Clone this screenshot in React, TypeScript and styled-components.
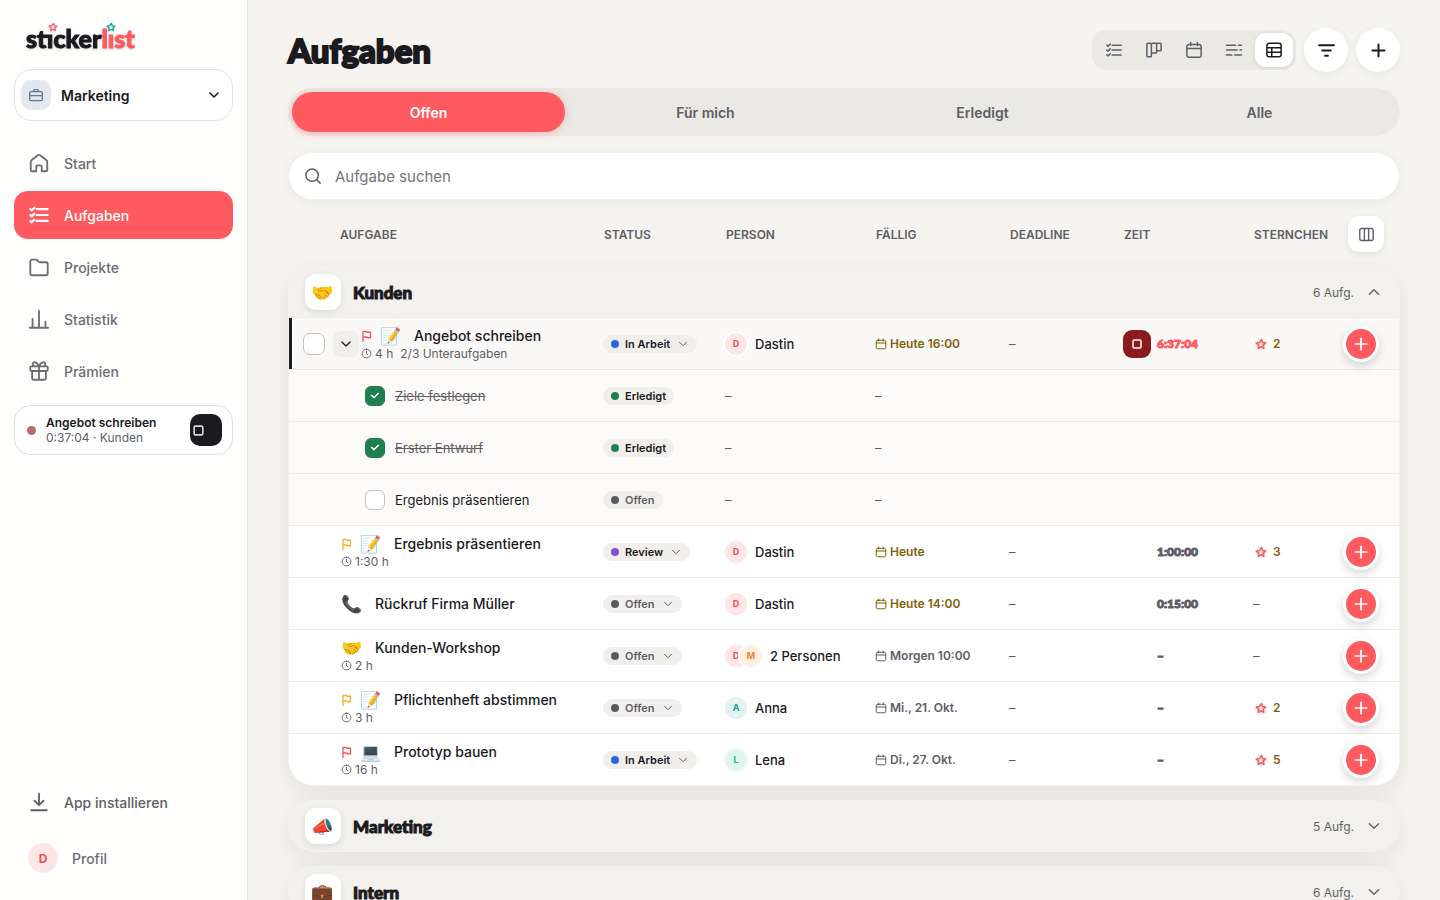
import React from "react";
import styled, { createGlobalStyle, css } from "styled-components";

const color = {
  ink: "#1b1a1f",
  muted: "#5f5e66",
  soft: "#6d6c74",
  coral: "#ff5a60",
  gold: "#80610a",
  line: "#ebeae6",
  page: "#f5f4f0",
  track: "#eae9e4",
  green: "#1f7f50",
};

const bodyFont = `Inter, "Noto Color Emoji", sans-serif`;
const displayFont = `Lato, sans-serif`;

const GlobalStyle = createGlobalStyle`
  *, *::before, *::after { box-sizing: border-box; }
  body { margin: 0; background: ${color.page}; color: ${color.ink}; font-family: ${bodyFont}; }
  button, input { font: inherit; color: inherit; }
  button { border: 0; padding: 0; background: none; cursor: pointer; }
  a { color: inherit; text-decoration: none; }
`;

/* ---------- icons ---------- */

const icons: Record<string, React.ReactNode> = {
  home: (
    <path d="M9 21v-5a1.5 1.5 0 0 1 1.5-1.5h3A1.5 1.5 0 0 1 15 16v5h4.5a1.5 1.5 0 0 0 1.5-1.5v-8.900a2 2 0 0 0-.8-1.600l-7-5.400a2 2 0 0 0-2.400 0l-7 5.400a2 2 0 0 0-.8 1.600v8.900A1.5 1.5 0 0 0 4.500 21z" />
  ),
  tasks: (
    <path d="M2.5 5.500 4 7l3-3M2.500 12 4 13.500l3-3M2.500 18.500 4 20l3-3M9.500 5.500h12M9.500 12h12M9.500 18.500h12" />
  ),
  folder: (
    <path d="M2.5 6a2 2 0 0 1 2-2h4.200a2 2 0 0 1 1.600.8l.9 1.200a2 2 0 0 0 1.600.8h6.700a2 2 0 0 1 2 2V19a2 2 0 0 1-2 2h-15a2 2 0 0 1-2-2z" />
  ),
  chart: <path d="M2 21.500h20M5 21v-9M12 21V3M19 21v-6" />,
  gift: (
    <path d="M4.500 12v7.500a2 2 0 0 0 2 2h11a2 2 0 0 0 2-2V12M3.500 7h17a1 1 0 0 1 1 1v3a1 1 0 0 1-1 1h-17a1 1 0 0 1-1-1V8a1 1 0 0 1 1-1zM12 7v14M12 7C10.500 3 9 2.500 7.800 2.500a2.200 2.200 0 0 0-1 4.300M12 7c1.500-4 3-4.500 4.200-4.500a2.200 2.200 0 0 1 1 4.300" />
  ),
  download: <path d="M12 3v12M7 10.500l5 5 5-5M3.500 21h17" />,
  briefcase: (
    <path d="M4.500 7h15a2 2 0 0 1 2 2v9.500a2 2 0 0 1-2 2h-15a2 2 0 0 1-2-2V9a2 2 0 0 1 2-2zM2.500 13h19M8 7c0-2 1-3 2.500-3h3C15 4 16 5 16 7" />
  ),
  down: <path d="m5 8.500 7 7 7-7" />,
  up: <path d="m5 15.500 7-7 7 7" />,
  board: (
    <path d="M4 3h3a1.500 1.500 0 0 1 1.500 1.500v15A1.500 1.500 0 0 1 7 21H4a1.500 1.500 0 0 1-1.500-1.500v-15A1.500 1.500 0 0 1 4 3zM8.500 4.500A1.500 1.500 0 0 1 10 3h4a1.500 1.500 0 0 1 1.500 1.500v10A1.500 1.500 0 0 1 14 16h-4a1.500 1.500 0 0 1-1.500-1.500M15.500 4.500A1.500 1.500 0 0 1 17 3h3a1.500 1.500 0 0 1 1.500 1.500v7A1.500 1.500 0 0 1 20 13h-3a1.500 1.500 0 0 1-1.500-1.500" />
  ),
  calendar: (
    <path d="M5.500 4.500h13a3 3 0 0 1 3 3v11a3 3 0 0 1-3 3h-13a3 3 0 0 1-3-3v-11a3 3 0 0 1 3-3zM2.500 10h19M7.500 2v4M16.500 2v4" />
  ),
  timeline: <path d="M2 5.500h12M18 5.500h4M2 12h14M20 12h2M2 18.500h7M13 18.500h9" />,
  table: (
    <path d="M5.500 3h13a3 3 0 0 1 3 3v12a3 3 0 0 1-3 3h-13a3 3 0 0 1-3-3V6a3 3 0 0 1 3-3zM2.500 9h19M2.500 15h19M9 9v12" />
  ),
  filter: <path d="M1.500 4.500h21M6 12h12M10 19.500h4" />,
  plus: <path d="M12 3.500v17M3.500 12h17" />,
  columns: (
    <path d="M5 3.500h14a2.500 2.500 0 0 1 2.500 2.500v12a2.500 2.500 0 0 1-2.500 2.500H5A2.500 2.500 0 0 1 2.500 18V6A2.500 2.500 0 0 1 5 3.500zM9 3.500v17M15 3.500v17" />
  ),
  search: <path d="M10.800 2.500a8.300 8.300 0 1 1 0 16.600 8.300 8.300 0 0 1 0-16.600zM17 17l4.500 4.500" />,
  clock: <path d="M12 2.500a9.500 9.500 0 1 1 0 19 9.500 9.500 0 0 1 0-19zM12 7v5.500l3 2" />,
  flag: <path d="M4 23V3h7l1 1.500h7v11h-6l-1-1.500H4" />,
  stop: <path d="M6.500 4h11A2.500 2.500 0 0 1 20 6.500v11a2.500 2.500 0 0 1-2.500 2.500h-11A2.500 2.500 0 0 1 4 17.500v-11A2.500 2.500 0 0 1 6.500 4z" />,
  star: (
    <path d="m13 3 2 6 6.500.8-5 4 1.200 6.700-5.700-3-5.500 3.300.8-6.500-5-4.500 6.500-1z" />
  ),
};

const Svg = styled.svg`
  display: block;
  flex: none;
  fill: none;
  stroke: currentColor;
  stroke-linecap: round;
  stroke-linejoin: round;
`;

function Icon({ name, size = 18, weight = 2 }: { name: string; size?: number; weight?: number }) {
  return (
    <Svg width={size} height={size} viewBox="0 0 24 24" strokeWidth={weight} aria-hidden="true">
      {icons[name]}
    </Svg>
  );
}

/* ---------- shell and sidebar ---------- */

const Shell = styled.div`
  display: grid;
  grid-template-columns: 248px minmax(0, 1fr);
  height: 100vh;
`;

const Sidebar = styled.aside`
  display: flex;
  flex-direction: column;
  padding: 20px 14px 18px;
  background: #fefefd;
  border-right: 1px solid #e4e3df;
`;

const Logo = styled.a`
  display: flex;
  align-self: flex-start;
  height: 33px;
  margin: 0 0 16px 12px;
  font-size: 25px;
  line-height: 36px;
  font-weight: 900;
  font-family: ${displayFont};
  -webkit-text-stroke: 1px currentColor;
  filter: drop-shadow(0 1px 1px rgba(0, 0, 0, 0.18));
`;

const LogoPart = styled.span<{ $accent?: boolean }>`
  color: ${(p) => (p.$accent ? color.coral : color.ink)};
`;

const StarredLetter = styled.span<{ $star: string }>`
  position: relative;
  svg {
    position: absolute;
    top: -1px;
    left: 50%;
    margin-left: -5px;
    color: ${(p) => p.$star};
  }
`;

const Workspace = styled.button`
  display: flex;
  align-items: center;
  gap: 10px;
  height: 52px;
  padding: 0 11px 0 6px;
  border: 1px solid #e2e2e4;
  border-radius: 18px;
  background: #fff;
  font-size: 14px;
  font-weight: 600;
  text-align: left;
`;

const WorkspaceIcon = styled.span`
  display: grid;
  place-items: center;
  width: 30px;
  height: 30px;
  border-radius: 10px;
  background: #e4e8ee;
  color: #5c7796;
`;

const Grow = styled.span`
  flex: 1;
  min-width: 0;
`;

const Nav = styled.nav`
  display: flex;
  flex-direction: column;
  gap: 4px;
  margin: 18px 0 10px;
`;

const NavLink = styled.a<{ $active?: boolean; $dark?: boolean }>`
  display: flex;
  align-items: center;
  gap: 14px;
  height: 48px;
  padding: 0 14px;
  border-radius: 14px;
  font-size: 14px;
  font-weight: 500;
  color: ${(p) => (p.$active ? "#fff" : p.$dark ? color.muted : color.soft)};
  background: ${(p) => (p.$active ? color.coral : "transparent")};
`;

const TimerCard = styled.section`
  display: flex;
  align-items: center;
  gap: 10px;
  height: 50px;
  padding: 0 10px 0 12px;
  border: 1px solid #e0e0e0;
  border-radius: 16px;
  background: #fff;
`;

const LiveDot = styled.span`
  width: 9px;
  height: 9px;
  border-radius: 50%;
  background: #b86a68;
`;

const TimerText = styled.div`
  flex: 1;
  font-size: 12px;
  line-height: 15px;
  color: ${color.muted};
  strong {
    display: block;
    font-weight: 600;
    color: ${color.ink};
  }
`;

const TimerStop = styled.button`
  display: flex;
  align-items: center;
  width: 32px;
  height: 32px;
  padding-left: 2px;
  border-radius: 10px;
  background: ${color.ink};
  color: #d8d8da;
`;

const SidebarFoot = styled.div`
  display: flex;
  flex-direction: column;
  gap: 8px;
  margin-top: auto;
`;

const tones = {
  red: ["#ffe6e6", "#ea5258"],
  orange: ["#fff0e2", "#f07d2c"],
  teal: ["#dff3f1", "#1a9c92"],
  mint: ["#ddf6ee", "#21b48a"],
} as const;
type Tone = keyof typeof tones;

const Avatar = styled.span<{ $tone: Tone; $large?: boolean }>`
  display: grid;
  place-items: center;
  flex: none;
  width: ${(p) => (p.$large ? 30 : 22)}px;
  height: ${(p) => (p.$large ? 30 : 22)}px;
  border-radius: 50%;
  font-size: ${(p) => (p.$large ? 12 : 9)}px;
  font-weight: 700;
  background: ${(p) => tones[p.$tone][0]};
  color: ${(p) => tones[p.$tone][1]};
  box-shadow: 0 0 0 2px #fff;
  & + & {
    margin-left: -7px;
  }
`;

/* ---------- page head ---------- */

const Main = styled.main`
  min-width: 0;
  height: 100vh;
  padding: 28px 40px;
  overflow: hidden auto;
  scrollbar-width: none;
`;

const PageHead = styled.header`
  display: flex;
  align-items: center;
  gap: 8px;
  height: 44px;
  margin-bottom: 16px;
`;

const Title = styled.h1`
  flex: 1;
  margin: 0;
  font-family: ${displayFont};
  font-size: 33px;
  font-weight: 900;
  -webkit-text-stroke: 2px currentColor;
`;

const ViewSwitch = styled.div`
  display: flex;
  gap: 2px;
  padding: 3px;
  border-radius: 14px;
  background: ${color.track};
`;

const ViewButton = styled.button<{ $active?: boolean }>`
  display: grid;
  place-items: center;
  width: 38px;
  height: 34px;
  border-radius: 11px;
  color: ${(p) => (p.$active ? color.ink : color.muted)};
  ${(p) =>
    p.$active &&
    css`
      background: #fff;
      box-shadow: 0 1px 4px rgba(0, 0, 0, 0.1);
    `}
`;

const RoundButton = styled.button`
  display: grid;
  place-items: center;
  width: 44px;
  height: 44px;
  border-radius: 50%;
  background: #fff;
  box-shadow: 0 2px 8px rgba(0, 0, 0, 0.07);
`;

const Tabs = styled.div`
  display: grid;
  grid-template-columns: repeat(4, 1fr);
  gap: 4px;
  padding: 4px;
  border-radius: 24px;
  background: ${color.track};
`;

const Tab = styled.button<{ $active?: boolean }>`
  height: 40px;
  border-radius: 20px;
  font-size: 14px;
  font-weight: 600;
  color: ${color.muted};
  ${(p) =>
    p.$active &&
    css`
      color: #fff;
      background: ${color.coral};
      box-shadow: 0 2px 8px rgba(255, 90, 96, 0.3);
    `}
`;

const Search = styled.label`
  display: flex;
  align-items: center;
  gap: 13px;
  height: 48px;
  margin: 16px 0;
  padding: 0 15px;
  border: 1px solid #f0efec;
  border-radius: 24px;
  background: #fff;
  color: ${color.muted};
  box-shadow: 0 3px 12px rgba(0, 0, 0, 0.05);
`;

const SearchInput = styled.input`
  flex: 1;
  min-width: 0;
  padding: 0;
  border: 0;
  outline: 0;
  background: none;
  font-size: 15px;
  &::placeholder {
    color: #74737a;
    opacity: 1;
  }
`;

/* ---------- task table ---------- */

const TableClip = styled.div`
  margin: 0 -8px;
  padding: 0 8px;
  overflow-x: clip;
`;

const Table = styled.table`
  display: flex;
  flex-direction: column;
  gap: 14px;
`;

const rowGrid = css`
  display: grid;
  grid-template-columns: minmax(0, 1fr) 122px 150px 134px 114px 130px 90px 56px;
  align-items: center;
`;

const Thead = styled.thead`
  display: block;
  padding: 0 1px;
`;

const HeadRow = styled.tr`
  ${rowGrid}
  height: 36px;
`;

const HeadCell = styled.th<{ $first?: boolean }>`
  padding: 0 0 0 ${(p) => (p.$first ? 51 : 1)}px;
  font-size: 12px;
  font-weight: 600;
  text-align: left;
  color: ${color.muted};
`;

const ColumnsCell = styled.td`
  padding: 0 0 0 5px;
`;

const ColumnsButton = styled.button`
  display: grid;
  place-items: center;
  width: 36px;
  height: 36px;
  border-radius: 11px;
  background: #fff;
  color: ${color.muted};
  box-shadow: 0 2px 6px rgba(0, 0, 0, 0.09);
`;

const Group = styled.tbody`
  display: block;
  border: 1px solid #f3f2ef;
  border-radius: 26px;
  background: #f2f1ee;
  box-shadow: 0 8px 28px rgba(30, 28, 20, 0.08);
  overflow: hidden;
`;

const GroupHead = styled.tr`
  display: block;
`;

const GroupCell = styled.th`
  display: block;
  padding: 0;
  text-align: left;
`;

const GroupButton = styled.button`
  display: flex;
  align-items: center;
  gap: 12px;
  width: 100%;
  height: 50px;
  padding: 0 17px 0 16px;
  text-align: left;
  color: ${color.muted};
`;

const GroupIcon = styled.span`
  display: grid;
  place-items: center;
  width: 36px;
  height: 36px;
  border-radius: 11px;
  background: #fff;
  font-size: 18px;
  box-shadow: 0 2px 6px rgba(0, 0, 0, 0.1);
`;

const GroupName = styled.span`
  flex: 1;
  font-family: ${displayFont};
  font-size: 17px;
  font-weight: 900;
  color: ${color.ink};
  -webkit-text-stroke: 1px currentColor;
`;

const GroupCount = styled.span`
  font-size: 12px;
  font-weight: 400;
`;

const Row = styled.tr<{ $kind: "task" | "selected" | "sub" }>`
  ${rowGrid}
  height: 52px;
  border-top: 1px solid ${color.line};
  background: ${(p) => ({ task: "#fff", selected: "#faf9f7", sub: "#fcfbf9" })[p.$kind]};
  ${(p) => p.$kind === "selected" && `box-shadow: inset 3px 0 0 ${color.ink};`}
`;

const Cell = styled.td`
  display: flex;
  align-items: center;
  min-width: 0;
  padding: 0;
`;

const TaskCell = styled(Cell)<{ $kind: "task" | "selected" | "sub" }>`
  padding-left: ${(p) => ({ task: 52, selected: 14, sub: 76 })[p.$kind]}px;
`;

const Check = styled.input<{ $large?: boolean }>`
  appearance: none;
  display: grid;
  place-items: center;
  flex: none;
  width: ${(p) => (p.$large ? 22 : 20)}px;
  height: ${(p) => (p.$large ? 22 : 20)}px;
  margin: 0;
  border: 1px solid #c2c1bf;
  border-radius: ${(p) => (p.$large ? 7 : 6)}px;
  background: #fff;
  &:checked {
    border-color: ${color.green};
    background: ${color.green};
  }
  &:checked::after {
    content: "";
    width: 8px;
    height: 5px;
    margin-top: -2px;
    border: solid #fff;
    border-width: 0 0 2px 2px;
    border-radius: 1px;
    transform: rotate(-45deg);
  }
`;

const Expand = styled.button`
  display: grid;
  place-items: center;
  width: 26px;
  height: 26px;
  margin: 0 2px 0 8px;
  border-radius: 8px;
  background: #f0efec;
`;

const TaskText = styled.div`
  min-width: 0;
  white-space: nowrap;
`;

const TaskTitle = styled.div`
  display: flex;
  align-items: center;
  height: 20px;
  font-size: 14px;
  font-weight: 500;
`;

const Flag = styled.span<{ $color: string }>`
  width: 19px;
  color: ${(p) => p.$color};
`;

const Emoji = styled.span`
  width: 34px;
  font-size: 17px;
  line-height: 20px;
`;

const TaskMeta = styled.div`
  display: flex;
  align-items: center;
  gap: 3px;
  height: 16px;
  font-size: 12px;
  font-weight: 400;
  color: ${color.muted};
`;

const MetaExtra = styled.span`
  margin-left: 4px;
`;

const SubLabel = styled.label<{ $done?: boolean }>`
  display: flex;
  align-items: center;
  gap: 10px;
  font-size: 13px;
  color: ${(p) => (p.$done ? color.muted : color.ink)};
  span {
    text-decoration: ${(p) => (p.$done ? "line-through" : "none")};
  }
`;

const pill = css<{ $quiet?: boolean }>`
  display: inline-flex;
  align-items: center;
  gap: 6px;
  height: 18px;
  padding: 0 8px;
  border-radius: 9px;
  background: #f0efeb;
  font-size: 11px;
  font-weight: 600;
  color: ${(p) => (p.$quiet ? color.muted : color.ink)};
`;

const StatusTag = styled.span`
  ${pill}
`;

const StatusButton = styled.button`
  ${pill}
  svg {
    margin-left: 1px;
    color: ${color.muted};
  }
`;

const StatusDot = styled.span<{ $color: string }>`
  width: 8px;
  height: 8px;
  border-radius: 50%;
  background: ${(p) => p.$color};
`;

const PersonName = styled.span`
  margin-left: 8px;
  font-size: 13px;
  font-weight: 500;
`;

const Due = styled.span<{ $today?: boolean }>`
  display: flex;
  align-items: center;
  gap: 3px;
  font-size: 12px;
  font-weight: 600;
  color: ${(p) => (p.$today ? color.gold : color.muted)};
`;

const Empty = styled.span`
  font-size: 13px;
  color: ${color.muted};
`;

const StopButton = styled.button`
  display: grid;
  place-items: center;
  width: 28px;
  height: 28px;
  margin-right: 6px;
  border-radius: 9px;
  background: #8c1a1c;
  color: #fff;
`;

const TimeCell = styled(Cell)<{ $running?: boolean }>`
  padding-left: ${(p) => (p.$running ? 0 : 34)}px;
  font-family: ${displayFont};
  font-size: 12px;
  font-weight: 900;
  -webkit-text-stroke: 1px currentColor;
  color: ${(p) => (p.$running ? color.coral : color.muted)};
`;

const Stars = styled.span`
  display: flex;
  align-items: center;
  gap: 6px;
  padding-left: 2px;
  font-size: 12px;
  font-weight: 600;
  color: ${color.gold};
  svg {
    color: ${color.coral};
    filter: drop-shadow(0 1px 1px rgba(0, 0, 0, 0.16));
  }
`;

const AddButton = styled.button`
  display: grid;
  place-items: center;
  width: 36px;
  height: 36px;
  border: 3px solid #fff;
  border-radius: 50%;
  background: ${color.coral};
  color: #fff;
  box-shadow: 0 4px 10px rgba(0, 0, 0, 0.16);
`;

/* ---------- data ---------- */

const statusColor: Record<string, string> = {
  "In Arbeit": "#2f66e0",
  Erledigt: color.green,
  Offen: "#5c5b63",
  Review: "#864fd0",
};

type Task = {
  title: string;
  emoji: string;
  flag?: string;
  effort?: string;
  subtasks?: { title: string; done: boolean }[];
  progress?: string;
  status: string;
  people: [string, Tone][];
  person: string;
  due: string;
  time: string;
  stars?: number;
};

const red = "#f4505a";
const amber = "#f7ae2b";

const tasks: Task[] = [
  {
    title: "Angebot schreiben", emoji: "📝", flag: red, effort: "4 h", progress: "2/3 Unteraufgaben",
    status: "In Arbeit", people: [["D", "red"]], person: "Dastin", due: "Heute 16:00", time: "6:37:04", stars: 2,
    subtasks: [
      { title: "Ziele festlegen", done: true },
      { title: "Erster Entwurf", done: true },
      { title: "Ergebnis präsentieren", done: false },
    ],
  },
  { title: "Ergebnis präsentieren", emoji: "📝", flag: amber, effort: "1:30 h", status: "Review", people: [["D", "red"]], person: "Dastin", due: "Heute", time: "1:00:00", stars: 3 },
  { title: "Rückruf Firma Müller", emoji: "📞", status: "Offen", people: [["D", "red"]], person: "Dastin", due: "Heute 14:00", time: "0:15:00" },
  { title: "Kunden-Workshop", emoji: "🤝", effort: "2 h", status: "Offen", people: [["D", "red"], ["M", "orange"]], person: "2 Personen", due: "Morgen 10:00", time: "–" },
  { title: "Pflichtenheft abstimmen", emoji: "📝", flag: amber, effort: "3 h", status: "Offen", people: [["A", "teal"]], person: "Anna", due: "Mi., 21. Okt.", time: "–", stars: 2 },
  { title: "Prototyp bauen", emoji: "💻", flag: red, effort: "16 h", status: "In Arbeit", people: [["L", "mint"]], person: "Lena", due: "Di., 27. Okt.", time: "–", stars: 5 },
];

const groups = [
  { name: "Kunden", emoji: "🤝", count: 6, tasks },
  { name: "Marketing", emoji: "📣", count: 5, tasks: [] as Task[] },
  { name: "Intern", emoji: "💼", count: 6, tasks: [] as Task[] },
];

const navItems = [
  ["home", "Start"],
  ["tasks", "Aufgaben"],
  ["folder", "Projekte"],
  ["chart", "Statistik"],
  ["gift", "Prämien"],
];

const views = [
  ["tasks", "Liste"],
  ["board", "Board"],
  ["calendar", "Kalender"],
  ["timeline", "Zeitachse"],
  ["table", "Tabelle"],
];

const columns = ["AUFGABE", "STATUS", "PERSON", "FÄLLIG", "DEADLINE", "ZEIT", "STERNCHEN"];

/* ---------- rows ---------- */

function TaskRow({ task }: { task: Task }) {
  const kind = task.subtasks ? "selected" : "task";
  return (
    <Row $kind={kind}>
      <TaskCell $kind={kind}>
        {task.subtasks && (
          <>
            <Check type="checkbox" $large aria-label={task.title} />
            <Expand aria-label="Unteraufgaben" aria-expanded="true">
              <Icon name="down" size={14} weight={2.3} />
            </Expand>
          </>
        )}
        <TaskText>
          <TaskTitle>
            {task.flag && (
              <Flag $color={task.flag}>
                <Icon name="flag" size={12} weight={2.6} />
              </Flag>
            )}
            <Emoji>{task.emoji}</Emoji>
            {task.title}
          </TaskTitle>
          {task.effort && (
            <TaskMeta>
              <Icon name="clock" size={11} />
              {task.effort}
              {task.progress && <MetaExtra>{task.progress}</MetaExtra>}
            </TaskMeta>
          )}
        </TaskText>
      </TaskCell>
      <Cell>
        <StatusButton $quiet={task.status === "Offen"}>
          <StatusDot $color={statusColor[task.status]} />
          {task.status}
          <Icon name="down" size={12} />
        </StatusButton>
      </Cell>
      <Cell>
        {task.people.map(([initial, tone]) => (
          <Avatar key={initial} $tone={tone}>{initial}</Avatar>
        ))}
        <PersonName>{task.person}</PersonName>
      </Cell>
      <Cell>
        <Due $today={task.due.startsWith("Heute")}>
          <Icon name="calendar" size={12} />
          {task.due}
        </Due>
      </Cell>
      <Cell><Empty>–</Empty></Cell>
      <TimeCell $running={kind === "selected"}>
        {kind === "selected" && (
          <StopButton aria-label="Timer stoppen">
            <Icon name="stop" size={12} weight={3} />
          </StopButton>
        )}
        {task.time}
      </TimeCell>
      <Cell>
        {task.stars ? (
          <Stars>
            <Icon name="star" size={12} weight={3} />
            {task.stars}
          </Stars>
        ) : (
          <Empty>–</Empty>
        )}
      </Cell>
      <Cell>
        <AddButton aria-label="Hinzufügen">
          <Icon name="plus" size={16} weight={2.6} />
        </AddButton>
      </Cell>
    </Row>
  );
}

function SubtaskRow({ title, done }: { title: string; done: boolean }) {
  const status = done ? "Erledigt" : "Offen";
  return (
    <Row $kind="sub">
      <TaskCell $kind="sub">
        <SubLabel $done={done}>
          <Check type="checkbox" defaultChecked={done} />
          <span>{title}</span>
        </SubLabel>
      </TaskCell>
      <Cell>
        <StatusTag $quiet={!done}>
          <StatusDot $color={statusColor[status]} />
          {status}
        </StatusTag>
      </Cell>
      <Cell><Empty>–</Empty></Cell>
      <Cell><Empty>–</Empty></Cell>
      <Cell />
      <Cell />
      <Cell />
      <Cell />
    </Row>
  );
}

export default function App() {
  return (
    <Shell>
      <GlobalStyle />
      <Sidebar>
        <Logo href="#" aria-label="stickerlist">
          <LogoPart>
            st
            <StarredLetter $star={color.coral}>ı<Icon name="star" size={10} weight={3} /></StarredLetter>
            cker
          </LogoPart>
          <LogoPart $accent>
            l
            <StarredLetter $star="#12a79c">ı<Icon name="star" size={10} weight={3} /></StarredLetter>
            st
          </LogoPart>
        </Logo>
        <Workspace>
          <WorkspaceIcon><Icon name="briefcase" size={16} /></WorkspaceIcon>
          <Grow>Marketing</Grow>
          <Icon name="down" size={14} weight={2.6} />
        </Workspace>
        <Nav>
          {navItems.map(([icon, label]) => (
            <NavLink key={label} href="#" $active={label === "Aufgaben"}>
              <Icon name={icon} size={22} weight={icon === "tasks" ? 2.4 : 2} />
              {label}
            </NavLink>
          ))}
        </Nav>
        <TimerCard>
          <LiveDot />
          <TimerText>
            <strong>Angebot schreiben</strong>
            0:37:04 · Kunden
          </TimerText>
          <TimerStop aria-label="Timer stoppen">
            <Icon name="stop" size={13} weight={3} />
          </TimerStop>
        </TimerCard>
        <SidebarFoot>
          <NavLink href="#" $dark>
            <Icon name="download" size={22} />
            App installieren
          </NavLink>
          <NavLink href="#">
            <Avatar $tone="red" $large>D</Avatar>
            Profil
          </NavLink>
        </SidebarFoot>
      </Sidebar>
      <Main>
        <PageHead>
          <Title>Aufgaben</Title>
          <ViewSwitch>
            {views.map(([icon, label]) => (
              <ViewButton key={label} aria-label={label} $active={icon === "table"}>
                <Icon name={icon} size={18} />
              </ViewButton>
            ))}
          </ViewSwitch>
          <RoundButton aria-label="Filter"><Icon name="filter" size={17} weight={2.8} /></RoundButton>
          <RoundButton aria-label="Neue Aufgabe"><Icon name="plus" size={17} weight={2.8} /></RoundButton>
        </PageHead>
        <Tabs role="tablist">
          {["Offen", "Für mich", "Erledigt", "Alle"].map((label) => (
            <Tab key={label} role="tab" aria-selected={label === "Offen"} $active={label === "Offen"}>
              {label}
            </Tab>
          ))}
        </Tabs>
        <Search>
          <Icon name="search" size={18} />
          <SearchInput type="search" placeholder="Aufgabe suchen" aria-label="Aufgabe suchen" />
        </Search>
        <TableClip>
          <Table>
            <Thead>
              <HeadRow>
                {columns.map((label, i) => (
                  <HeadCell key={label} scope="col" $first={i === 0}>{label}</HeadCell>
                ))}
                <ColumnsCell>
                  <ColumnsButton aria-label="Spalten"><Icon name="columns" size={17} /></ColumnsButton>
                </ColumnsCell>
              </HeadRow>
            </Thead>
            {groups.map((group) => (
              <Group key={group.name}>
                <GroupHead>
                  <GroupCell colSpan={8} scope="rowgroup">
                    <GroupButton aria-expanded={group.tasks.length > 0}>
                      <GroupIcon>{group.emoji}</GroupIcon>
                      <GroupName>{group.name}</GroupName>
                      <GroupCount>{group.count} Aufg.</GroupCount>
                      <Icon name={group.tasks.length ? "up" : "down"} size={16} />
                    </GroupButton>
                  </GroupCell>
                </GroupHead>
                {group.tasks.map((task) => (
                  <React.Fragment key={task.title}>
                    <TaskRow task={task} />
                    {task.subtasks?.map((sub) => <SubtaskRow key={sub.title} {...sub} />)}
                  </React.Fragment>
                ))}
              </Group>
            ))}
          </Table>
        </TableClip>
      </Main>
    </Shell>
  );
}
